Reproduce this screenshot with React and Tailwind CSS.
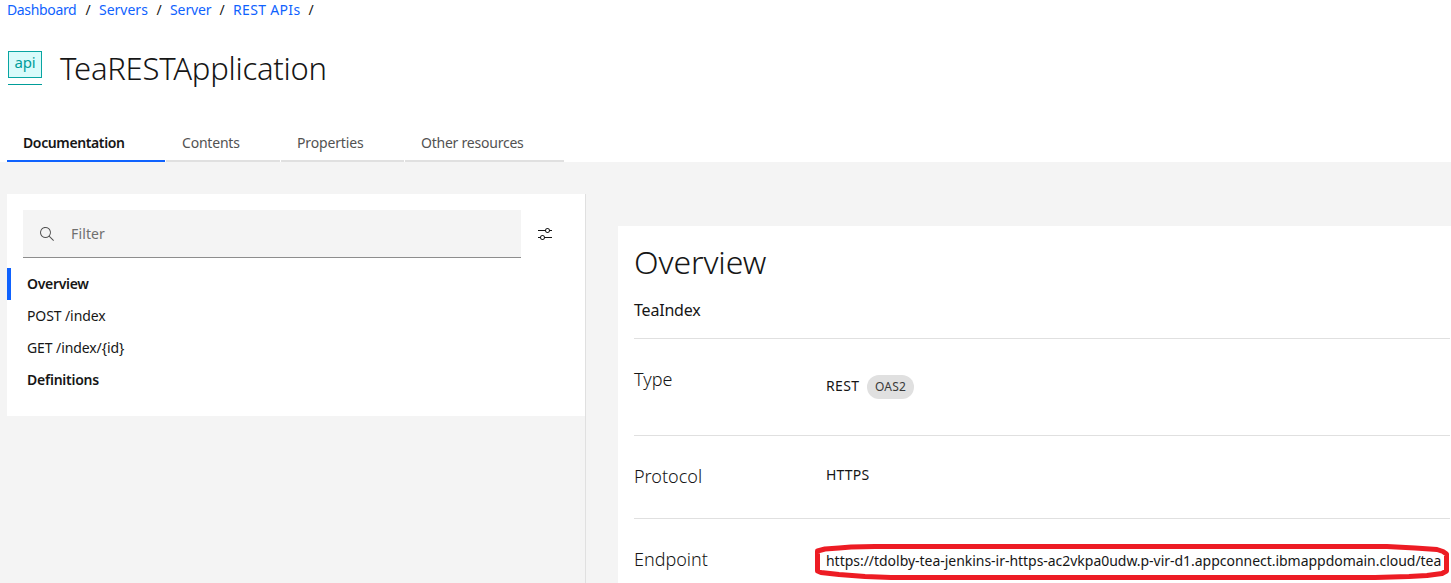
const crumbs = [
  { label: 'Dashboard', cls: 'w-[70px] tracking-[-0.35px]' },
  { label: 'Servers', cls: 'w-[49px]' },
  { label: 'Server', cls: 'w-[41px] tracking-[-0.1px]' },
  { label: 'REST APIs', cls: 'w-[67px] tracking-[0.335px]' },
];

const tabs = [
  { label: 'Documentation', cls: 'w-[158px] border-[#0f62fe] font-semibold text-[#161616] tracking-[-0.38px]' },
  { label: 'Contents', cls: 'w-[114px] border-[#e0e0e0] text-[#525252] tracking-[-0.2px]' },
  { label: 'Properties', cls: 'w-[123px] border-[#e0e0e0] text-[#525252] tracking-[-0.15px]' },
  { label: 'Other resources', cls: 'w-[159px] border-[#e0e0e0] text-[#525252] tracking-[-0.23px]' },
];

const nav = [
  { label: 'Overview', cls: 'border-[#0f62fe] font-semibold tracking-[-0.3px]' },
  { label: 'POST /index', cls: 'border-transparent tracking-[-0.1px]' },
  { label: 'GET /index/{id}', cls: 'border-transparent tracking-[-0.09px]' },
  { label: 'Definitions', cls: 'border-transparent font-semibold tracking-[-0.24px]' },
];

function ApiIcon() {
  return (
    <div className="w-[34px] h-[34px] flex flex-col justify-between text-[#009d9a]">
      <div className="h-[27px] border border-[#08a5a2] bg-[#d9fbfb] flex justify-center">
        <span className="text-[15px] leading-[21px] tracking-[-0.1px]">api</span>
      </div>
      <div className="h-px bg-[#009d9a]" />
    </div>
  );
}

function SearchIcon() {
  return (
    <svg width="16" height="16" viewBox="0 0 16 16" fill="#525252">
      <path d="M15,14.3L10.7,10c1.9-2.3,1.6-5.8-0.7-7.7S4.2,0.7,2.3,3S0.7,8.8,3,10.7c2,1.7,5,1.7,7,0l4.3,4.3L15,14.3z M2,6.5C2,4,4,2,6.5,2S11,4,11,6.5S9,11,6.5,11S2,9,2,6.5z" />
    </svg>
  );
}

function SettingsIcon() {
  return (
    <svg width="16" height="16" viewBox="0 0 32 32" fill="#161616">
      <path d="M30,8h-4.1c-0.5-2.3-2.5-4-4.9-4s-4.4,1.7-4.9,4H2v2h14.1c0.5,2.3,2.5,4,4.9,4s4.4-1.7,4.9-4H30V8z M21,12c-1.7,0-3-1.3-3-3s1.3-3,3-3s3,1.3,3,3S22.7,12,21,12z M2,24h4.1c0.5,2.3,2.5,4,4.9,4s4.4-1.7,4.9-4H30v-2H15.9c-0.5-2.3-2.5-4-4.9-4s-4.4,1.7-4.9,4H2V24z M11,20c1.7,0,3,1.3,3,3s-1.3,3-3,3s-3-1.3-3-3S9.3,20,11,20z" />
    </svg>
  );
}

function Header() {
  return (
    <header className="h-[162px] bg-white flex flex-col">
      <nav className="h-[19px] pl-[7px] flex items-center text-sm">
        {crumbs.map((c) => (
          <div key={c.label} className="flex whitespace-nowrap">
            <a className={`text-[#0f62fe] ${c.cls}`}>{c.label}</a>
            <span className="w-[22px] text-center">/</span>
          </div>
        ))}
      </nav>
      <div className="mt-8 pl-2 flex">
        <ApiIcon />
        <h1 className="ml-[18px] text-[31px] leading-[34px] font-light tracking-[-0.25px]">TeaRESTApplication</h1>
      </div>
      <div className="mt-auto pl-[7px] flex gap-px text-sm">
        {tabs.map((t) => (
          <div key={t.label} className={`h-[38px] pl-4 pt-[9px] border-b-2 ${t.cls}`}>{t.label}</div>
        ))}
      </div>
    </header>
  );
}

function Sidebar() {
  return (
    <aside className="w-[579px] shrink-0 border-r border-[#e0e0e0] text-sm">
      <div className="h-[222px] bg-white pt-4">
        <div className="ml-4 flex items-center">
          <div className="w-[498px] h-12 bg-[#f4f4f4] border-b border-[#8d8d8d] pl-4 flex items-center gap-4">
            <SearchIcon />
            <span className="text-[#6f6f6f] tracking-[0.13px]">Filter</span>
          </div>
          <div className="ml-4"><SettingsIcon /></div>
        </div>
        <ul className="mt-[10px]">
          {nav.map((n) => (
            <li key={n.label} className={`h-8 border-l-4 pl-4 flex items-center ${n.cls}`}>{n.label}</li>
          ))}
        </ul>
      </div>
    </aside>
  );
}

function Overview() {
  return (
    <main className="mt-8 ml-8 flex-1 min-w-0 bg-white pl-4 pr-px">
      <h2 className="pt-[14px] text-[32px] leading-[44px] font-light tracking-[-0.1px]">Overview</h2>
      <p className="mt-[14px] text-base leading-6 tracking-[-0.2px]">TeaIndex</p>
      <section className="mt-4 h-[97px] border-t border-[#e0e0e0] flex">
        <h3 className="w-48 pt-7 text-lg leading-6 font-light">Type</h3>
        <div className="pt-9 flex gap-2 items-start text-sm leading-6">
          <span className="w-[33px] leading-[22px] tracking-[0.38px]">REST</span>
          <span className="w-[47px] h-6 rounded-full bg-[#e0e0e0] text-center text-xs leading-6 text-[#393939] tracking-[0.18px]">OAS2</span>
        </div>
      </section>
      <section className="h-[83px] border-t border-[#e0e0e0] flex">
        <h3 className="w-48 pt-7 text-lg leading-6 font-light">Protocol</h3>
        <span className="pt-7 text-sm leading-[22px] tracking-[0.2px]">HTTPS</span>
      </section>
      <section className="h-[65px] border-t border-[#e0e0e0] flex">
        <h3 className="w-48 shrink-0 pt-7 text-lg leading-6 font-light">Endpoint</h3>
        <span className="pt-[31px] text-sm leading-[22px] tracking-[-0.03px] whitespace-nowrap">
          https://tdolby-tea-jenkins-ir-https-ac2vkpa0udw.p-vir-d1.appconnect.ibmappdomain.cloud/tea
        </span>
      </section>
    </main>
  );
}

export default function App() {
  return (
    <div className="relative w-[1451px] h-[583px] overflow-hidden bg-[#f4f4f4] text-[#161616] font-['Noto_Sans',sans-serif]">
      <Header />
      <div className="h-[421px] pt-8 pl-[7px] flex">
        <Sidebar />
        <Overview />
      </div>
      <svg className="absolute left-[815px] top-[543px]" width="636" height="38" viewBox="0 0 636 38" fill="none" stroke="#ed1c24" strokeWidth="5" strokeLinejoin="round">
        <path d="M2.5 8 L10 6 L24 5 L36 4 L60 3.5 H572 L600 5 L622 6.5 L628 8.5 L631.5 11 V28 L627 30.5 L612 32.5 L594 33.5 L560 34.5 H76 L50 33.5 L24 31.5 L6 29.5 L2.5 28 Z" />
      </svg>
    </div>
  );
}
